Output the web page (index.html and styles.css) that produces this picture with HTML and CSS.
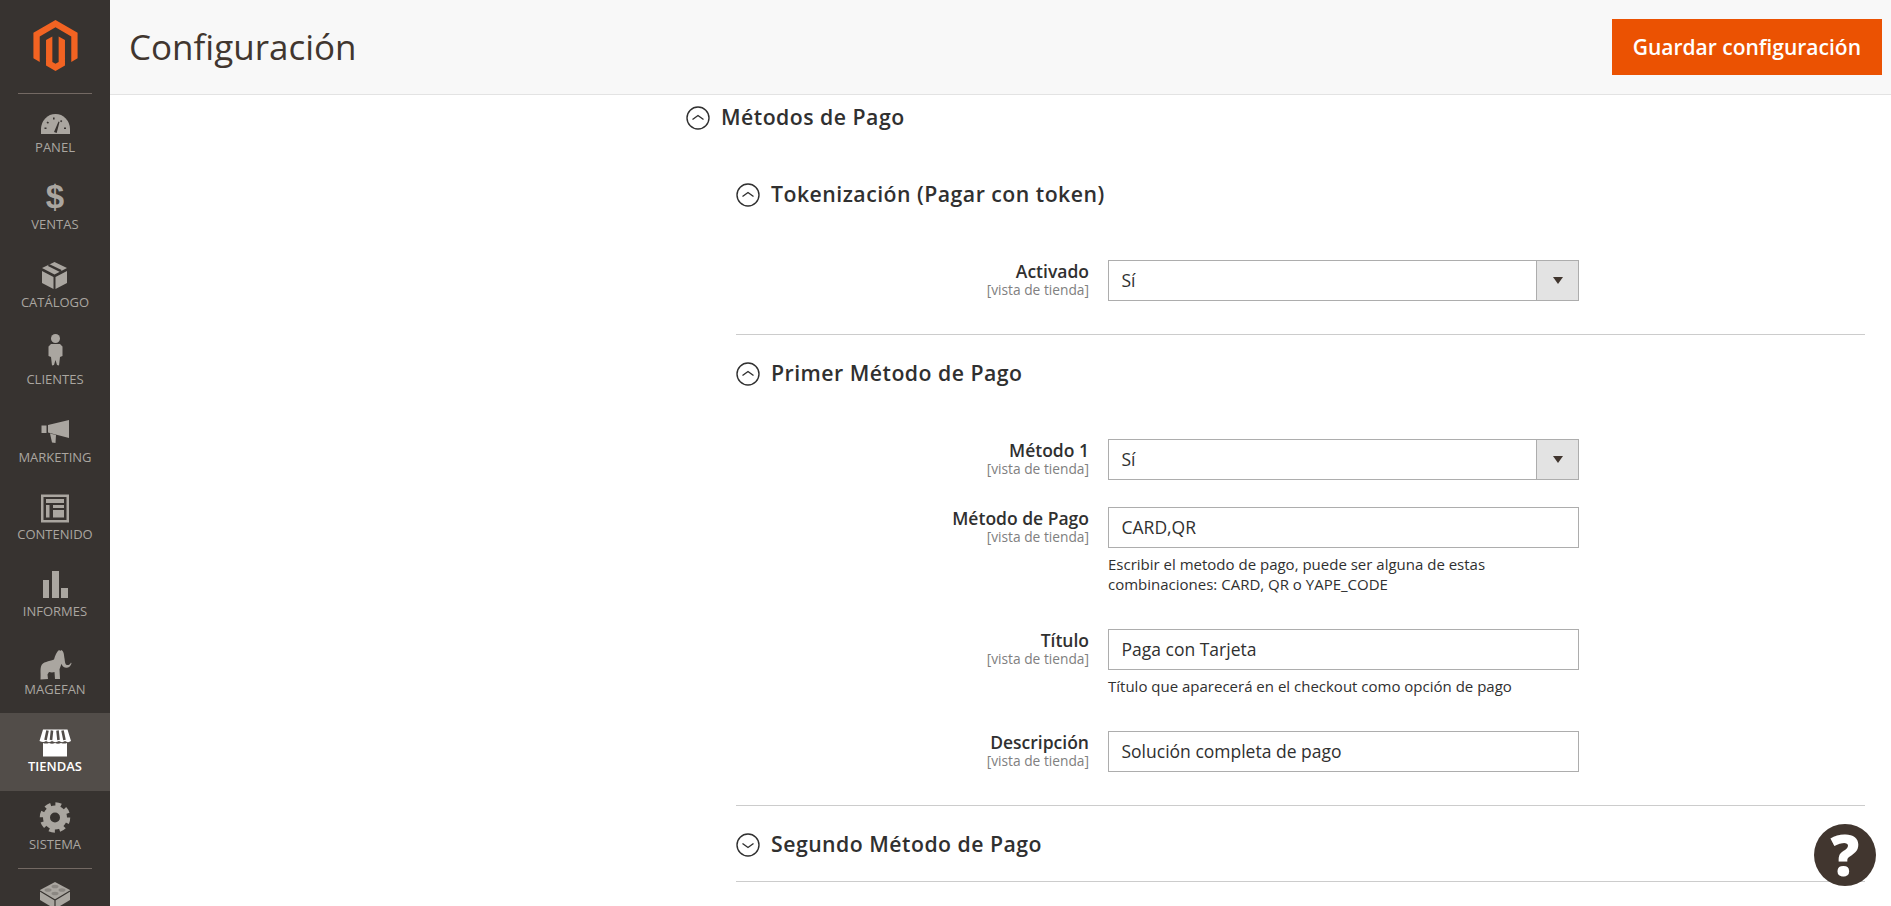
FILE: index.html
```html
<!DOCTYPE html>
<html lang="es">
<head>
<meta charset="utf-8">
<title>Configuración</title>
<link rel="stylesheet" href="styles.css">
</head>
<body>
<div class="app">
  <aside class="sidebar">
    <div class="logo">
      <svg class="logo-mark" viewBox="0 0 24 24"><path d="M12 24l-4.455-2.572v-12l2.97-1.715v12.001l1.485.902 1.485-.902V7.713l2.971 1.715v12L12 24zM22.391 6v12l-2.969 1.714V7.713L12 3.43 4.574 7.713v12.001L1.609 18V6L12 0l10.391 6z"/></svg>
    </div>
    <div class="sep"></div>
    <nav class="nav">
      <a class="nav-item">
        <svg class="nav-icon" viewBox="0 0 40 34"><path d="M6 27v-5A14.5 15 0 0 1 35 22v5z"/><path class="cut" d="M19 25l4.500-10.500 1 .5-2.800 11zM9.500 20.500h2v1.500h-2zM12.500 14.500l1.500 1-1 1.300-1.500-1zM18 10.500h1.600v2H18zM29 20.500h2v1.500h-2zM26 13l1.300 1-1 1.300-1.300-1z"/></svg>
        <span class="nav-label">PANEL</span>
      </a>
      <a class="nav-item">
        <svg class="nav-icon" viewBox="0 0 40 34"><text class="dollar" x="20" y="23.500" text-anchor="middle">$</text></svg>
        <span class="nav-label">VENTAS</span>
      </a>
      <a class="nav-item">
        <svg class="nav-icon" viewBox="0 0 40 34"><path d="M19.500 0L32 6 19.500 12.500 7 6zM7 9l11.500 6v12L7 21zM20.500 15L32 9v12l-11.500 6z"/><path class="cut-line" d="M13.500 3l12.500 6.200"/></svg>
        <span class="nav-label">CATÁLOGO</span>
      </a>
      <a class="nav-item">
        <svg class="nav-icon" viewBox="0 0 40 34"><circle cx="20.500" cy="-.5" r="4.500"/><path d="M16 5h9l2.500 2.500v9.500l-2.500 1-1 8.500-2-.5-1.500-5-1.500 5-2 .5-1-8.500-2.500-1V7.500z"/></svg>
        <span class="nav-label">CLIENTES</span>
      </a>
      <a class="nav-item">
        <svg class="nav-icon" viewBox="0 0 40 34"><path d="M13 8l21-5v18L13 15.500zM6.500 8.500h5v7.500h-5zM15 16.500l6 1.500-.5 8-3.500-.5z"/></svg>
        <span class="nav-label">MARKETING</span>
      </a>
      <a class="nav-item">
        <svg class="nav-icon" viewBox="0 0 40 34"><path fill-rule="evenodd" d="M6 .5h28v28H6zM8.500 3v23h23V3z"/><path d="M11 5h18v4H11zM11 11h3.500v12.500H11zM18 11h11v3H18zM18 16h11v7.500H18z"/></svg>
        <span class="nav-label">CONTENIDO</span>
      </a>
      <a class="nav-item">
        <svg class="nav-icon" viewBox="0 0 40 34"><path d="M8 9h6v18H8zM17 0h7v27h-7zM26 17h7v10h-7z"/></svg>
        <span class="nav-label">INFORMES</span>
      </a>
      <a class="nav-item">
        <svg class="nav-icon" viewBox="0 0 40 34"><path d="M5.500 30.500c.5-6-.5-9 .5-13 1.500-5 8-5 13-7 1-4 3-8 5-9.500 1 1 1.800 1 2.500 0 2.500 1.500 2.500 5 3 8.500.5 3 .5 6 2.500 6.500 1.500.3 3-.5 4-2.500l.5 1c-1 3-3 4.500-5.500 4.300-3-.3-4-2.500-4.500-4l-2 5.500.5 9.700h-5l-.5-7c-1.500.5-3.500.5-5.500 0l-1.500 2.500.5 4.500z"/></svg>
        <span class="nav-label">MAGEFAN</span>
      </a>
      <a class="nav-item is-active">
        <svg class="nav-icon" viewBox="0 0 40 34"><path d="M8 3.500h24.500L36 15c-2 1.500-4 1.500-6 0-2 1.500-4 1.500-6 0-2.500 1.500-5 1.500-7 0-2 1.500-4 1.500-6 0-2 1.500-4 1-6.500 0z"/><path class="store-line" d="M12.500 4.500L10.500 14M17 4.500L16 14M22.500 4.500L23.500 14M27.500 4.500L29.500 14"/><path d="M8 17c2 .8 4 .8 6 0 2 1 4 1 6 0 2 1 4 1 6 0 2 .8 4 .8 6 0v13.500H8z"/></svg>
        <span class="nav-label">TIENDAS</span>
      </a>
      <a class="nav-item">
        <svg class="nav-icon" viewBox="0 0 40 34"><circle class="gear-ring" cx="20" cy="13.500" r="8.500"/><circle class="gear-teeth" cx="20" cy="13.500" r="13"/></svg>
        <span class="nav-label">SISTEMA</span>
      </a>
    </nav>
    <div class="sep"></div>
    <a class="nav-item nav-extra">
      <svg class="nav-icon" viewBox="0 0 40 34"><path d="M20 0l15 8v10L20 27 5 18V8z"/><path class="cut-line thin" d="M5 9l15 9 15-9M20 18v9"/><ellipse class="stud" cx="13" cy="8" rx="3.500" ry="1.800"/><ellipse class="stud" cx="20" cy="4.500" rx="3.500" ry="1.800"/><ellipse class="stud" cx="27" cy="8" rx="3.500" ry="1.800"/><ellipse class="stud" cx="20" cy="11.500" rx="3.500" ry="1.800"/></svg>
    </a>
  </aside>

  <div class="main">
    <header class="page-header">
      <h1 class="page-title">Configuración</h1>
      <button class="save-button" type="button">Guardar configuración</button>
    </header>

    <main class="content">
      <h2 class="section-head">
        <svg class="toggle" viewBox="0 0 24 24"><circle cx="12" cy="12" r="11"/><path d="M6.500 13.500L12 9.500l5.500 4"/></svg>
        <span class="section-title">Métodos de Pago</span>
      </h2>

      <section class="group">
        <h3 class="section-head">
          <svg class="toggle" viewBox="0 0 24 24"><circle cx="12" cy="12" r="11"/><path d="M6.500 13.500L12 9.500l5.500 4"/></svg>
          <span class="section-title">Tokenización (Pagar con token)</span>
        </h3>
        <div class="form">
          <div class="row">
            <div class="label">Activado<small class="scope">[vista de tienda]</small></div>
            <div class="field">
              <div class="control select">Sí<span class="select-arrow"></span></div>
            </div>
          </div>
        </div>
      </section>

      <section class="group">
        <h3 class="section-head">
          <svg class="toggle" viewBox="0 0 24 24"><circle cx="12" cy="12" r="11"/><path d="M6.500 13.500L12 9.500l5.500 4"/></svg>
          <span class="section-title">Primer Método de Pago</span>
        </h3>
        <div class="form">
          <div class="row">
            <div class="label">Método 1<small class="scope">[vista de tienda]</small></div>
            <div class="field">
              <div class="control select">Sí<span class="select-arrow"></span></div>
            </div>
          </div>
          <div class="row">
            <div class="label">Método de Pago<small class="scope">[vista de tienda]</small></div>
            <div class="field">
              <div class="control">CARD,QR</div>
              <p class="note">Escribir el metodo de pago, puede ser alguna de estas combinaciones: CARD, QR o YAPE_CODE</p>
            </div>
          </div>
          <div class="row">
            <div class="label">Título<small class="scope">[vista de tienda]</small></div>
            <div class="field">
              <div class="control">Paga con Tarjeta</div>
              <p class="note">Título que aparecerá en el checkout como opción de pago</p>
            </div>
          </div>
          <div class="row">
            <div class="label">Descripción<small class="scope">[vista de tienda]</small></div>
            <div class="field">
              <div class="control">Solución completa de pago</div>
            </div>
          </div>
        </div>
      </section>

      <section class="group is-collapsed">
        <h3 class="section-head">
          <svg class="toggle" viewBox="0 0 24 24"><circle cx="12" cy="12" r="11"/><path d="M6.500 10.500L12 14.500l5.500-4"/></svg>
          <span class="section-title">Segundo Método de Pago</span>
        </h3>
      </section>
    </main>
  </div>
</div>
<a class="help-badge">?</a>
</body>
</html>
```

FILE: styles.css
```css
* { box-sizing: border-box; }
html, body { margin: 0; height: 100%; overflow: hidden; background: #fff; }
body { font-family: "Open Sans", sans-serif; color: #303030; }

.app { display: flex; height: 906px; overflow: hidden; }

.sidebar { width: 110px; flex: none; background: #373330; overflow: hidden; }
.logo { height: 93px; padding-top: 20px; display: flex; justify-content: center; }
.logo-mark { width: 51px; height: 51px; fill: #f26322; }
.sep { height: 1px; margin: 0 18px; background: #736963; }
.nav { display: flex; flex-direction: column; }

.nav-item { height: 77.4px; padding-top: 13px; display: flex; flex-direction: column; align-items: center; flex: none; }
.nav-icon { width: 40px; height: 34px; flex: none; fill: #aaa6a0; overflow: visible; }
.nav-label { margin-top: -2px; font-size: 13px; line-height: 16px; color: #aaa6a0; white-space: nowrap; }
.nav-item.is-active { background: #524d49; }
.nav-item.is-active .nav-icon { fill: #fff; }
.nav-item.is-active .nav-label { color: #fff; font-weight: 600; }

.cut { fill: #373330; }
.cut-line { fill: none; stroke: #373330; stroke-width: 2.5; }
.cut-line.thin { stroke-width: 1.2; }
.stud { fill: #8b8782; }
.store-line { fill: none; stroke: #524d49; stroke-width: 2.6; }
.dollar { font-family: "Liberation Sans", sans-serif; font-weight: 700; font-size: 33px; }
.gear-ring { fill: none; stroke: #aaa6a0; stroke-width: 7; }
.gear-teeth { fill: none; stroke: #aaa6a0; stroke-width: 4.5; stroke-dasharray: 5.600 4.610; }

.main { flex: 1; min-width: 0; display: flex; flex-direction: column; }

.page-header { height: 95px; flex: none; display: flex; align-items: center; justify-content: space-between; padding: 0 9px 0 19px; background: #f8f8f8; border-bottom: 1px solid #e3e3e3; }
.page-title { margin: 0; font-size: 35px; line-height: 44px; font-weight: 400; color: #41362f; }
.save-button { height: 56px; padding: 0 20px; border: 1px solid #eb5202; background: #eb5202; color: #fff; font: 600 21px/1 "Open Sans", sans-serif; }

.content { padding: 0 26px 0 576px; }

.section-head { display: flex; align-items: center; gap: 11px; height: 44px; margin: 0; font-size: 21.250px; font-weight: 600; letter-spacing: .48px; color: #303030; }
.section-title { padding-bottom: 2px; }
.toggle { width: 24px; height: 24px; margin-top: 2px; flex: none; fill: none; stroke: #303030; stroke-width: 1.400; }

.group { margin-left: 50px; border-bottom: 1px solid #cccccc; padding-top: 16px; padding-bottom: 33px; }
.group:first-of-type { padding-top: 33px; }
.group.is-collapsed { padding-top: 16px; padding-bottom: 15px; }

.form { display: flex; flex-direction: column; gap: 27px; margin-top: 44px; }
.row { display: grid; grid-template-columns: 353px 471px; column-gap: 19px; }
.label { padding-top: 1px; text-align: right; font-size: 17.500px; line-height: 20px; font-weight: 600; }
.scope { display: block; font-size: 13.750px; line-height: 16px; font-weight: 400; color: #808080; margin-top: 1px; }

.control { position: relative; height: 41px; padding: 0 13px 0 12.500px; border: 1px solid #adadad; background: #fff; font-size: 17.500px; line-height: 38px; color: #303030; }
.select-arrow { position: absolute; top: 0; right: 0; bottom: 0; width: 42px; background: #e3e3e3; border-left: 1px solid #adadad; }
.select-arrow::after { content: ""; position: absolute; left: 16px; top: 16px; border: 5.500px solid transparent; border-top: 7px solid #41362f; border-bottom: 0; }

.note { margin: 6px 0 0; padding-bottom: 8px; font-size: 15px; line-height: 20px; color: #303030; }

.help-badge { position: fixed; left: 1814px; top: 824px; width: 62px; height: 62px; border-radius: 50%; background: #41362f; color: #fff; font: 800 57px/60px "Open Sans", sans-serif; text-align: center; }
```
